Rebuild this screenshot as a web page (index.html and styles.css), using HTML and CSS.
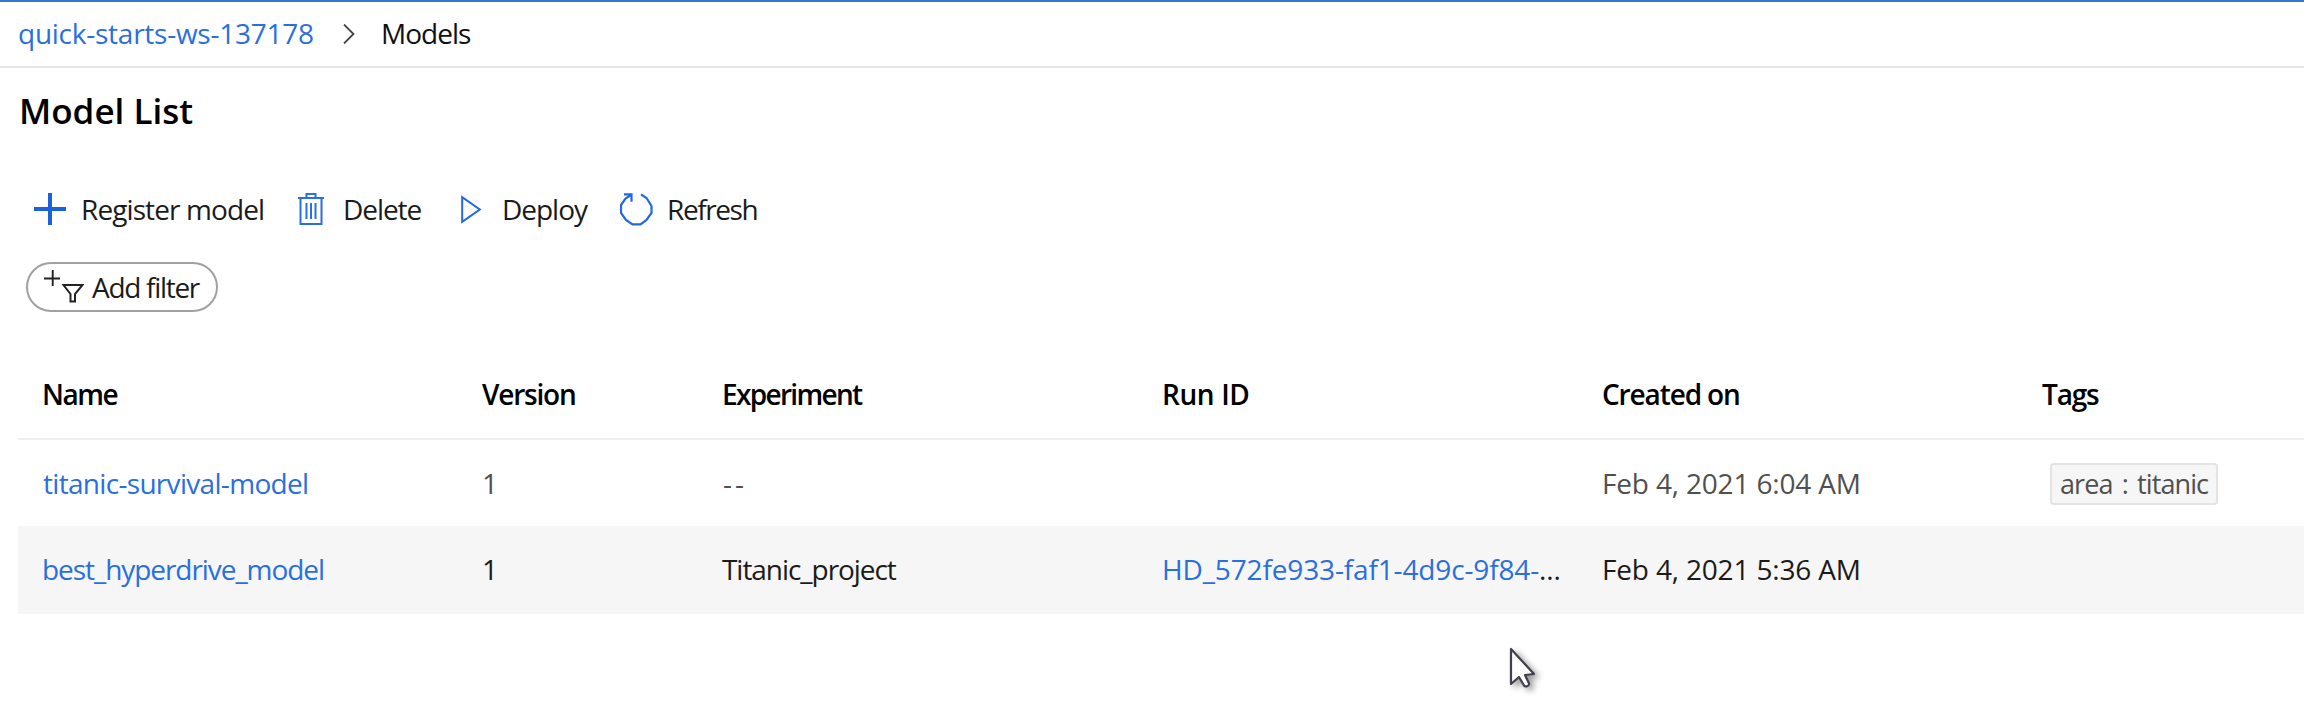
FILE: index.html
```html
<!DOCTYPE html>
<html lang="en">
<head>
<meta charset="utf-8">
<title>Model List</title>
<link rel="stylesheet" href="styles.css">
</head>
<body>
<nav class="breadcrumb">
  <a class="crumb-link" href="#">quick-starts-ws-137178</a>
  <svg class="chevron" width="12" height="20" viewBox="0 0 12 20"><path d="M1 .5 10.5 10 1 19.5" fill="none" stroke="#444" stroke-width="1.8"/></svg>
  <span class="crumb-current">Models</span>
</nav>
<main class="page">
  <h1 class="title">Model List</h1>
  <div class="toolbar">
    <button class="command register">
      <svg width="32" height="32" viewBox="0 0 32 32"><path d="M16 0v32M0 16h32" fill="none" stroke="#1a62dc" stroke-width="4"/></svg>
      <span>Register model</span>
    </button>
    <button class="command delete">
      <svg width="26" height="32" viewBox="0 0 26 32"><path d="M0 5h26M8.500 5V1h9v4M2.500 5v26h21V5M8.500 10v16M13 10v16M17.500 10v16" fill="none" stroke="#2a6fe0" stroke-width="2"/></svg>
      <span>Delete</span>
    </button>
    <button class="command deploy">
      <svg width="21" height="29" viewBox="0 0 21 29"><path d="M1.200 2.200v24.600L18.800 14.500Z" fill="none" stroke="#2268e0" stroke-width="2"/></svg>
      <span>Deploy</span>
    </button>
    <button class="command refresh">
      <svg width="33" height="33" viewBox="0 0 33 33"><path d="M21 1.300 26.500 5l5 8v7L26.500 27 20.500 31.300h-8L6 27l-5-7v-8l4.500-6.500L11 2M4 1.300h7.500v7.500" fill="none" stroke="#2268e0" stroke-width="2.200"/></svg>
      <span>Refresh</span>
    </button>
  </div>
  <button class="filter">
    <svg width="40" height="33" viewBox="0 0 40 33"><path d="M8.700 0v16M0 8.500h16" fill="none" stroke="#222" stroke-width="1.900"/><path d="M19.500 15h19L31 24v7.500h-4.500V24Z" fill="none" stroke="#222" stroke-width="2"/></svg>
    <span>Add filter</span>
  </button>
  <div class="table">
    <div class="row head">
      <span class="h-name">Name</span><span class="h-version">Version</span><span class="h-experiment">Experiment</span><span class="h-run">Run ID</span><span class="h-created">Created on</span><span class="h-tags">Tags</span>
    </div>
    <div class="row first">
      <a class="model-a" href="#">titanic-survival-model</a><span class="version">1</span><span class="none">--</span><span></span><span class="date">Feb 4, 2021 6:04 AM</span><span class="tag">area : titanic</span>
    </div>
    <div class="row hovered">
      <a class="model-b" href="#">best_hyperdrive_model</a><span class="version">1</span><span class="project">Titanic_project</span><span class="run"><a href="#">HD_572fe933-faf1-4d9c-9f84-</a>...</span><span class="date">Feb 4, 2021 5:36 AM</span><span></span>
    </div>
  </div>
</main>
<svg class="cursor" width="36" height="46" viewBox="0 0 36 46"><path d="M2 2v35l8-7 5 8.500c1.500 2 5.500.5 5-2L16 28l9-1Z" fill="#fff" stroke="#41414d" stroke-width="2.200" stroke-linejoin="round"/></svg>
</body>
</html>
```
FILE: styles.css
```css
* { box-sizing: border-box; }

body {
  margin: 0;
  height: 722px;
  overflow: hidden;
  background: #fff;
  color: #111;
  font: 28px/40px "Open Sans", "Noto Sans", sans-serif;
  white-space: nowrap;
}

a { color: #2a6fe0; text-decoration: none; }

button {
  padding: 0;
  border: 0;
  background: none;
  color: #1b1b1b;
  font: inherit;
}

.breadcrumb {
  display: flex;
  height: 68px;
  padding: 11px 0 0 18px;
  border-top: 2px solid #2f7bd4;
  border-bottom: 2px solid #e6e6e6;
}
.crumb-link { width: 325px; letter-spacing: -.25px; }
.chevron { margin: 11px 26px 0 0; }
.crumb-current { letter-spacing: -1px; }

.title {
  margin: 19px 0 0 19px;
  font-size: 35px;
  font-weight: 600;
  line-height: 48px;
  letter-spacing: 0;
  color: #000;
}

.toolbar { display: flex; height: 40px; margin: 54px 0 0 34px; }
.command { display: flex; align-items: center; }
.register { width: 264px; gap: 15px; letter-spacing: -.9px; }
.delete { width: 163px; gap: 19px; letter-spacing: -1.06px; }
.deploy { width: 159px; gap: 20px; letter-spacing: -1.02px; }
.refresh { gap: 14px; letter-spacing: -1.4px; }

.filter {
  display: flex;
  width: 192px;
  height: 50px;
  margin: 33px 0 0 26px;
  padding: 3px 0 0 16px;
  border: 2px solid #a3a19f;
  border-radius: 25px;
  letter-spacing: -1.3px;
}
.filter svg { margin: 3px 8px 0 0; }

.table { margin: 36px 0 0 18px; }
.row {
  display: grid;
  grid-template-columns: 440px 240px 440px 441px 440px 1fr;
  align-items: center;
  height: 88px;
  padding: 0 0 2px 23px;
  color: #505050;
}
.head {
  height: 92px;
  padding: 2px 0 0 24px;
  border-bottom: 2px solid #eee;
  color: #000;
  font-weight: 600;
}
.first { height: 86px; padding-bottom: 1px; }
.hovered { background: #f6f6f6; color: #1b1b1b; }

.h-name { letter-spacing: -1.5px; }
.h-version { letter-spacing: -1.2px; }
.h-experiment { letter-spacing: -1.68px; }
.h-run { letter-spacing: -.4px; }
.h-created { margin-left: -1px; letter-spacing: -1.13px; }
.h-tags { margin-left: -1px; letter-spacing: -1.19px; }
.model-a { padding-left: 2px; letter-spacing: -.69px; }
.model-b { padding-left: 1px; letter-spacing: -1.06px; }
.version { padding-left: 1px; }
.none { padding-left: 2px; letter-spacing: 3px; }
.project { padding-left: 1px; letter-spacing: -1.05px; }
.run { padding-left: 1px; letter-spacing: -.14px; }
.date { letter-spacing: -.17px; }

.tag {
  justify-self: start;
  width: 168px;
  height: 42px;
  margin: 3px 0 0 8px;
  padding-left: 8px;
  border: 2px solid #e3e3e3;
  border-radius: 4px;
  background: #f6f6f6;
  font-size: 27px;
  line-height: 38px;
  letter-spacing: -.9px;
  word-spacing: 3px;
}

.cursor {
  position: absolute;
  left: 1509px;
  top: 647px;
  filter: drop-shadow(4px 3px 3px rgba(0, 0, 0, .4));
}
```
